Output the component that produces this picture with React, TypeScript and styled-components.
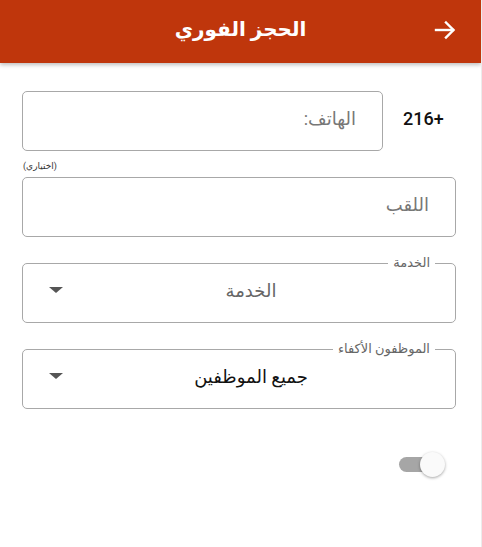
import React from "react";
import styled, { createGlobalStyle } from "styled-components";

const Global = createGlobalStyle`
  html, body { margin: 0; padding: 0; background: #fff; }
  body { font-family: Roboto, "Noto Sans", "DejaVu Sans", sans-serif; }
  * { box-sizing: border-box; }
`;

const Page = styled.div`
  width: 482px;
  height: 547px;
  direction: rtl;
  display: flex;
  flex-direction: column;
  border-right: 1px solid #ececec;
  position: relative;
  overflow: hidden;
`;

const Header = styled.header`
  height: 63px;
  background: #bf360c;
  display: flex;
  align-items: center;
  justify-content: center;
  position: relative;
  box-shadow: 0 2px 4px rgba(0, 0, 0, 0.25);
  z-index: 1;
`;

const Title = styled.h1`
  margin: 0;
  color: #fff;
  font-size: 20px;
  font-weight: 700;
  margin-top: -6px;
`;

const BackButton = styled.button`
  position: absolute;
  right: 22px;
  top: 16px;
  width: 28px;
  height: 28px;
  padding: 0;
  border: none;
  background: transparent;
  display: flex;
  align-items: center;
  justify-content: center;
`;

const Form = styled.main`
  display: flex;
  flex-direction: column;
  padding: 28px 25px 0 22px;
`;

const PhoneRow = styled.div`
  display: flex;
  align-items: center;
  gap: 20px;
`;

const Prefix = styled.span`
  direction: ltr;
  font-size: 18px;
  font-weight: 500;
  color: #111;
  width: 40px;
  margin-right: 13px;
  margin-top: -6px;
  unicode-bidi: plaintext;
`;

const Box = styled.div<{ $grow?: boolean }>`
  flex: ${(p) => (p.$grow ? 1 : "none")};
  height: 60px;
  border: 1px solid #a8a8a8;
  border-radius: 5px;
  display: flex;
  align-items: center;
  padding: 0 26px 6px 26px;
  font-size: 18px;
  color: #777;
`;

const Hint = styled.div`
  font-size: 9px;
  color: #333;
  text-align: left;
  margin: 8px 0 4px 0;
  padding-left: 1px;
  line-height: 14px;
`;

const Outlined = styled.fieldset<{ $top: number }>`
  margin: 0;
  border: 1px solid #a8a8a8;
  border-radius: 5px;
  padding: 0;
  position: relative;
  margin-top: ${(p) => p.$top}px;
`;

const Legend = styled.legend`
  font-size: 13px;
  color: #666;
  padding: 0 5px;
  margin-right: 20px;
  line-height: 14px;
`;

const SelectInner = styled.div`
  height: 52px;
  display: flex;
  align-items: center;
  justify-content: center;
  padding: 0 0 12px 24px;
  position: relative;
`;

const SelectValue = styled.span<{ $muted?: boolean }>`
  font-size: 18px;
  color: ${(p) => (p.$muted ? "#666" : "#111")};
`;

const Caret = styled.span`
  position: absolute;
  left: 26px;
  top: 17px;
  width: 0;
  height: 0;
  border-left: 7px solid transparent;
  border-right: 7px solid transparent;
  border-top: 6px solid #555;
`;

const SwitchRow = styled.div`
  display: flex;
  justify-content: flex-start;
  padding-right: 23px;
  margin-top: 48px;
`;

const Track = styled.div`
  width: 34px;
  height: 15px;
  border-radius: 8px;
  background: #a6a6a6;
  position: relative;
`;

const Thumb = styled.div`
  position: absolute;
  left: 21px;
  top: -5px;
  width: 25px;
  height: 25px;
  border-radius: 50%;
  background: #fafafa;
  box-shadow: 0 1px 3px rgba(0, 0, 0, 0.35);
`;

export default function App() {
  return (
    <>
      <Global />
      <Page>
        <Header>
          <Title>الحجز الفوري</Title>
          <BackButton aria-label="back">
            <svg width="24" height="24" viewBox="0 0 24 24" fill="none" stroke="#fff" strokeWidth="2.4" strokeLinecap="square">
              <path d="M3 12h17" />
              <path d="M13 4.5l7.5 7.5-7.5 7.5" />
            </svg>
          </BackButton>
        </Header>
        <Form>
          <PhoneRow>
            <Prefix>216+</Prefix>
            <Box $grow>الهاتف:</Box>
          </PhoneRow>
          <Hint>(اختياري)</Hint>
          <Box>اللقب</Box>
          <Outlined $top={19}>
            <Legend>الخدمة</Legend>
            <SelectInner>
              <SelectValue $muted>الخدمة</SelectValue>
              <Caret />
            </SelectInner>
          </Outlined>
          <Outlined $top={19}>
            <Legend>الموظفون الأكفاء</Legend>
            <SelectInner>
              <SelectValue>جميع الموظفين</SelectValue>
              <Caret />
            </SelectInner>
          </Outlined>
          <SwitchRow>
            <Track>
              <Thumb />
            </Track>
          </SwitchRow>
        </Form>
      </Page>
    </>
  );
}
